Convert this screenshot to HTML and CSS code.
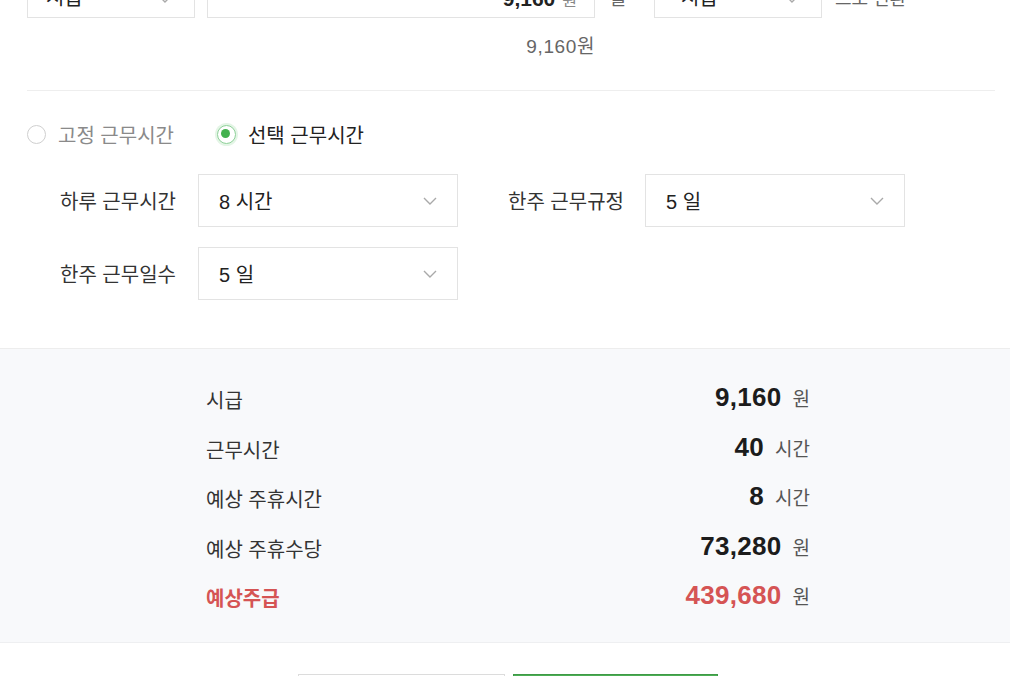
FILE: index.html
```html
<!DOCTYPE html>
<html lang="ko">
<head>
<meta charset="utf-8">
<title>주급 계산기</title>
<link rel="stylesheet" href="styles.css">
</head>
<body>
<div class="page">
  <section class="form">
    <div class="convert-row">
      <div class="box select-sm">
        <span class="box-text">시급</span>
        <svg class="chev" width="14" height="8" viewBox="0 0 14 8"><path d="M1 1l6 6 6-6" fill="none" stroke="#a9a9a9" stroke-width="1.4"/></svg>
      </div>
      <div class="box input-wide">
        <span class="amount">9,160</span><span class="unit-sm">원</span>
      </div>
      <span class="joiner">을</span>
      <div class="box select-sm second">
        <span class="box-text">시급</span>
        <svg class="chev" width="14" height="8" viewBox="0 0 14 8"><path d="M1 1l6 6 6-6" fill="none" stroke="#a9a9a9" stroke-width="1.4"/></svg>
      </div>
      <span class="joiner-end">으로 변환</span>
    </div>
    <div class="converted">9,160원</div>
    <div class="divider"></div>
    <div class="radios">
      <label class="radio">
        <span class="radio-dot"></span>
        <span class="radio-text">고정 근무시간</span>
      </label>
      <label class="radio checked">
        <span class="radio-dot"></span>
        <span class="radio-text">선택 근무시간</span>
      </label>
    </div>
    <div class="fields">
      <div class="field-row">
        <span class="field-label">하루 근무시간</span>
        <div class="box select">
          <span class="box-text">8 시간</span>
          <svg class="chev" width="14" height="8" viewBox="0 0 14 8"><path d="M1 1l6 6 6-6" fill="none" stroke="#a9a9a9" stroke-width="1.4"/></svg>
        </div>
        <span class="field-label second-label">한주 근무규정</span>
        <div class="box select">
          <span class="box-text">5 일</span>
          <svg class="chev" width="14" height="8" viewBox="0 0 14 8"><path d="M1 1l6 6 6-6" fill="none" stroke="#a9a9a9" stroke-width="1.4"/></svg>
        </div>
      </div>
      <div class="field-row">
        <span class="field-label">한주 근무일수</span>
        <div class="box select">
          <span class="box-text">5 일</span>
          <svg class="chev" width="14" height="8" viewBox="0 0 14 8"><path d="M1 1l6 6 6-6" fill="none" stroke="#a9a9a9" stroke-width="1.4"/></svg>
        </div>
      </div>
    </div>
  </section>

  <section class="summary">
    <div class="summary-inner">
      <div class="sum-row">
        <span class="sum-label">시급</span>
        <span class="sum-value"><b>9,160</b><span class="sum-unit">원</span></span>
      </div>
      <div class="sum-row">
        <span class="sum-label">근무시간</span>
        <span class="sum-value"><b>40</b><span class="sum-unit">시간</span></span>
      </div>
      <div class="sum-row">
        <span class="sum-label">예상 주휴시간</span>
        <span class="sum-value"><b>8</b><span class="sum-unit">시간</span></span>
      </div>
      <div class="sum-row">
        <span class="sum-label">예상 주휴수당</span>
        <span class="sum-value"><b>73,280</b><span class="sum-unit">원</span></span>
      </div>
      <div class="sum-row total">
        <span class="sum-label">예상주급</span>
        <span class="sum-value"><b>439,680</b><span class="sum-unit">원</span></span>
      </div>
    </div>
  </section>

  <div class="actions">
    <button class="btn btn-reset">초기화</button>
    <button class="btn btn-primary">계산하기</button>
  </div>
</div>
</body>
</html>
```
FILE: styles.css
```css
html, body {
  margin: 0;
  padding: 0;
  background: #ffffff;
  overflow: hidden;
}
body {
  font-family: "Liberation Sans", "Noto Sans CJK KR", sans-serif;
  color: #222;
  width: 1010px;
  height: 676px;
}
.page {
  display: flex;
  flex-direction: column;
}
.form {
  padding: 0 15px 0 27px;
  display: flex;
  flex-direction: column;
}
.convert-row {
  display: flex;
  align-items: center;
  height: 52px;
  margin-top: -34px;
}
.box {
  box-sizing: border-box;
  border: 1px solid #e3e3e3;
  background: #fff;
  display: flex;
  align-items: center;
  height: 100%;
  position: relative;
}
.select-sm {
  width: 168px;
  padding: 8px 0 0 18px;
}
.select-sm.second {
  padding-left: 26px;
}
.select-sm .chev {
  position: absolute;
  right: 22px;
  top: 28px;
}
.box-text {
  font-size: 20px;
  color: #222;
}
.input-wide {
  width: 388px;
  margin-left: 12px;
  justify-content: flex-end;
  padding: 20px 17px 0 0;
  align-items: baseline;
}
.amount {
  font-size: 21px;
  font-weight: bold;
  color: #222;
}
.unit-sm {
  font-size: 16px;
  color: #888;
  margin-left: 7px;
}
.joiner {
  font-size: 18px;
  color: #666;
  width: 59px;
  padding-left: 15px;
  box-sizing: border-box;
  padding-top: 10px;
}
.joiner-end {
  font-size: 18px;
  color: #666;
  margin-left: 13px;
  padding-top: 10px;
}
.converted {
  width: 568px;
  text-align: right;
  font-size: 19px;
  letter-spacing: 0.6px;
  line-height: 24px;
  color: #666;
  margin-top: 17px;
}
.divider {
  height: 1px;
  background: #eeeeee;
  margin-top: 31px;
}
.radios {
  display: flex;
  align-items: center;
  margin-top: 31px;
  height: 24px;
}
.radio {
  display: flex;
  align-items: center;
  margin-right: 43px;
}
.radio-dot {
  box-sizing: border-box;
  width: 19px;
  height: 19px;
  border-radius: 50%;
  border: 1.5px solid #cfcfcf;
  background: #fff;
  margin-right: 12px;
  position: relative;
}
.radio.checked .radio-dot {
  border-color: #8fd19a;
  box-shadow: 0 0 0 2px #e4f5e6;
}
.radio.checked .radio-dot::after {
  content: "";
  position: absolute;
  left: 3.5px;
  top: 3.5px;
  width: 9px;
  height: 9px;
  border-radius: 50%;
  background: #43b14f;
}
.radio-text {
  font-size: 20px;
  color: #8a8a8a;
}
.radio.checked .radio-text {
  color: #222;
}
.fields {
  display: flex;
  flex-direction: column;
  gap: 20px;
  margin-top: 28px;
  padding-left: 33px;
}
.field-row {
  display: flex;
  align-items: center;
  height: 53px;
}
.field-label {
  font-size: 20px;
  color: #333;
  width: 138px;
}
.second-label {
  margin-left: 50px;
  width: 137px;
}
.select {
  width: 260px;
  padding-left: 20px;
  justify-content: space-between;
  padding-right: 20px;
}
.summary {
  margin-top: 48px;
  background: #f8f9fb;
  border-top: 1px solid #ededed;
  border-bottom: 1px solid #eeeff1;
  padding: 24px 0 21px;
}
.summary-inner {
  width: 604px;
  margin-left: 206px;
  display: flex;
  flex-direction: column;
}
.sum-row {
  display: flex;
  justify-content: space-between;
  align-items: center;
  height: 49.5px;
}
.sum-label {
  font-size: 20px;
  color: #333;
  padding-top: 4px;
}
.sum-value {
  display: flex;
  align-items: baseline;
}
.sum-value b {
  font-size: 26px;
  letter-spacing: 0.3px;
  font-weight: bold;
  color: #1c1c1c;
}
.sum-unit {
  font-size: 19px;
  color: #555;
  margin-left: 11px;
}
.total .sum-label,
.total .sum-value b {
  color: #d55454;
  font-weight: bold;
}
.actions {
  display: flex;
  margin-top: 31px;
  margin-left: 298px;
  gap: 8px;
}
.btn {
  width: 207px;
  height: 54px;
  font-family: "Liberation Sans", "Noto Sans CJK KR", sans-serif;
  font-size: 18px;
  box-sizing: border-box;
}
.btn-reset {
  background: #fff;
  border: 1px solid #dcdcdc;
  color: #333;
}
.btn-primary {
  width: 205px;
  background: #4cae55;
  border: 1px solid #3f9a47;
  color: #fff;
}
```
